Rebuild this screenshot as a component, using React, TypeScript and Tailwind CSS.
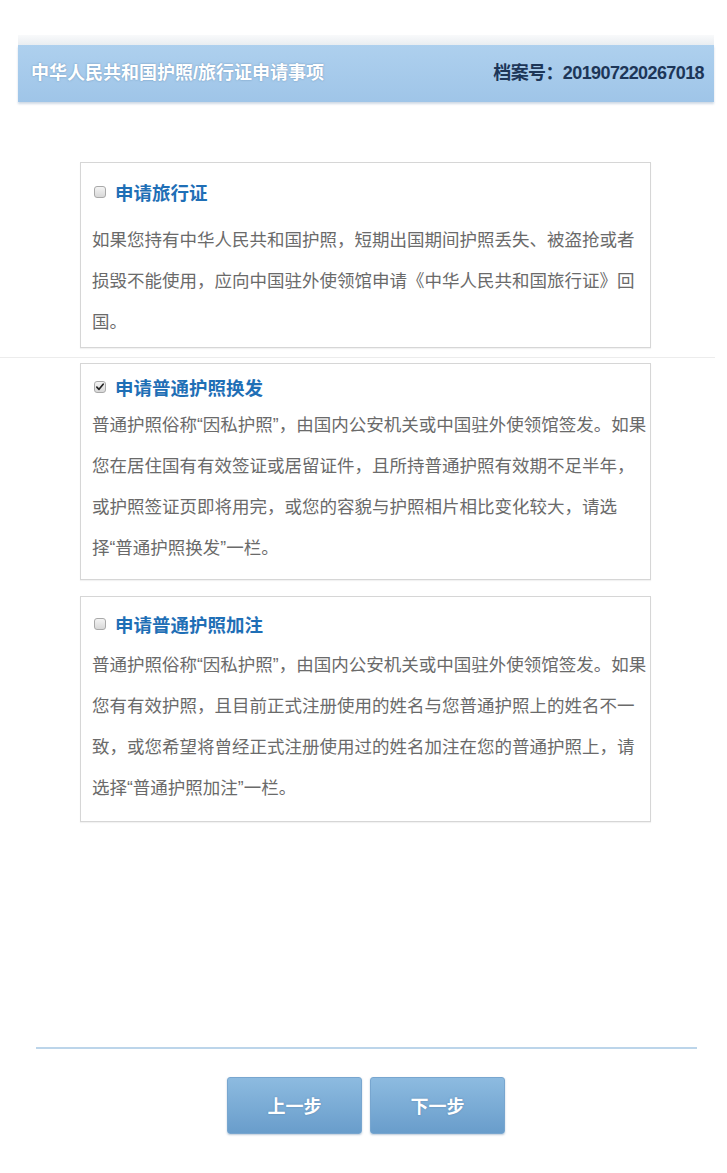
import React from "react";

const CJK = "font-['Noto_Sans_CJK_SC','Noto_Sans',sans-serif]";
const MIXED = "font-['Liberation_Sans','Noto_Sans_CJK_SC',sans-serif]";

function Check({ checked }: { checked?: boolean }) {
  return (
    <span className="relative inline-flex h-[12px] w-[12px] shrink-0 items-center justify-center rounded-[3px] border border-[#a9a9a9] bg-gradient-to-b from-[#f4f4f4] to-[#d8d8d8]">
      {checked && (
        <svg viewBox="0 0 12 12" className="h-[10px] w-[10px]">
          <path d="M2.2 6.2 L4.8 8.8 L9.8 2.6" fill="none" stroke="#222" strokeWidth="2" strokeLinecap="round" strokeLinejoin="round" />
        </svg>
      )}
    </span>
  );
}

function OptionCard({
  title,
  lines,
  checked,
  spacing,
}: {
  title: string;
  lines: string[];
  checked?: boolean;
  spacing: { box: string; body: string };
}) {
  return (
    <div className={`ml-[80px] w-[571px] border border-[#d6d6d6] bg-white pl-[11px] pr-[4px] shadow-[0_1px_1px_rgba(0,0,0,0.05)] ${spacing.box}`}>
      <div className="flex h-[28px] items-center gap-[9px] pl-[2px]">
        <Check checked={checked} />
        <span className={`${CJK} text-[18.5px] font-bold leading-[28px] text-[#1f6fb6]`}>{title}</span>
      </div>
      <p className={`${MIXED} whitespace-nowrap text-[17.5px] leading-[41px] text-[#6a6a6a] ${spacing.body}`}>
        {lines.map((l, i) => (
          <React.Fragment key={i}>
            {l}
            {i < lines.length - 1 && <br />}
          </React.Fragment>
        ))}
      </p>
    </div>
  );
}

function StepButton({ label }: { label: string }) {
  return (
    <button
      type="button"
      className={`${CJK} flex h-[57px] w-[135px] items-center justify-center rounded-[3px] border border-[#78a6cf] bg-gradient-to-b from-[#8dbbe0] to-[#699dcb] text-[18px] font-bold text-white shadow-[0_1px_2px_rgba(60,100,140,0.35)] [text-shadow:0_0_2px_rgba(40,80,120,0.4)]`}
    >
      {label}
    </button>
  );
}

export default function App() {
  return (
    <div className="flex h-[1173px] w-[727px] flex-col bg-white">
      {/* faint strip above the header */}
      <div className="mt-[35px] ml-[18px] h-[10px] w-[696px] bg-gradient-to-b from-[#f9fafb] to-[#e9edf1]" />

      {/* header bar */}
      <div className="ml-[18px] flex h-[57px] w-[696px] items-center justify-between bg-gradient-to-b from-[#aed0ee] to-[#9fc5e8] pl-[13px] pr-[10px] shadow-[0_2px_2px_rgba(120,150,180,0.35)]">
        <span className={`${MIXED} text-[18px] font-bold text-white [text-shadow:0_0_2px_rgba(70,110,150,0.6)]`}>
          中华人民共和国护照/旅行证申请事项
        </span>
        <span className={`${MIXED} text-[18px] font-bold tracking-[-0.6px] text-[#1d3658]`}>
          档案号：201907220267018
        </span>
      </div>

      <div className="mt-[60px] flex flex-col">
        <OptionCard
          spacing={{ box: "pt-[15px] pb-[4px]", body: "mt-[14px]" }}
          title="申请旅行证"
          lines={[
            "如果您持有中华人民共和国护照，短期出国期间护照丢失、被盗抢或者",
            "损毁不能使用，应向中国驻外使领馆申请《中华人民共和国旅行证》回",
            "国。",
          ]}
        />
        <div className="mt-[9px] h-px w-[715px] bg-[#ececec]" />
        <div className="mt-[5px]">
          <OptionCard
            checked
            spacing={{ box: "pt-[9px] pb-[10px]", body: "mt-[4px]" }}
            title="申请普通护照换发"
            lines={[
              "普通护照俗称“因私护照”，由国内公安机关或中国驻外使领馆签发。如果",
              "您在居住国有有效签证或居留证件，且所持普通护照有效期不足半年，",
              "或护照签证页即将用完，或您的容貌与护照相片相比变化较大，请选",
              "择“普通护照换发”一栏。",
            ]}
          />
        </div>
        <div className="mt-[16px]">
          <OptionCard
            spacing={{ box: "pt-[13px] pb-[12px]", body: "mt-[7px]" }}
            title="申请普通护照加注"
            lines={[
              "普通护照俗称“因私护照”，由国内公安机关或中国驻外使领馆签发。如果",
              "您有有效护照，且目前正式注册使用的姓名与您普通护照上的姓名不一",
              "致，或您希望将曾经正式注册使用过的姓名加注在您的普通护照上，请",
              "选择“普通护照加注”一栏。",
            ]}
          />
        </div>
      </div>

      <div className="flex-1" />

      {/* footer rule and step buttons */}
      <div className="ml-[36px] h-[2px] w-[661px] bg-[#bcd5ea]" />
      <div className="mt-[28px] mb-[39px] ml-[227px] flex gap-[8px]">
        <StepButton label="上一步" />
        <StepButton label="下一步" />
      </div>
    </div>
  );
}
